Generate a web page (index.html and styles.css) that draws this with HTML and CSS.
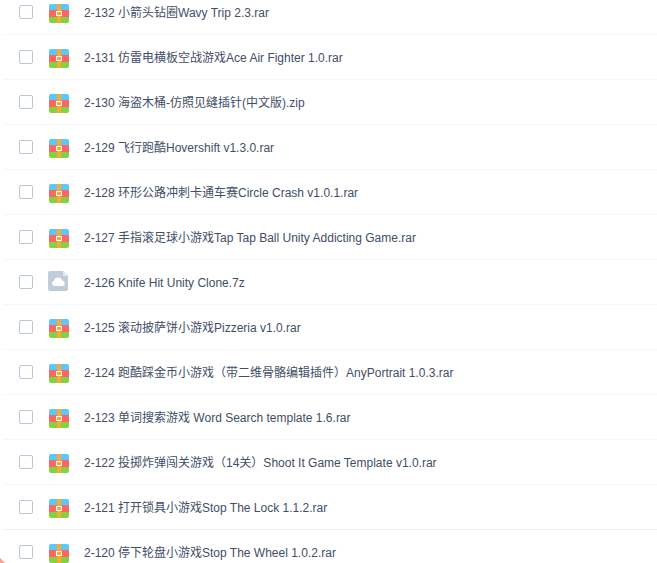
FILE: index.html
```html
<!DOCTYPE html>
<html lang="zh">
<head>
<meta charset="utf-8">
<title>文件列表</title>
<link rel="stylesheet" href="styles.css">
</head>
<body>
<svg class="defs" width="0" height="0" aria-hidden="true">
  <defs>
    <clipPath id="rarClip"><rect x="0" y="0" width="20" height="19" rx="2"/></clipPath>
    <symbol id="rar" viewBox="0 0 20 19">
      <g clip-path="url(#rarClip)">
        <rect width="20" height="6" fill="#5ac8fa"/>
        <rect y="6" width="20" height="7" fill="#ff6661"/>
        <rect y="13" width="20" height="6" fill="#82d243"/>
        <rect x="8" width="4" height="19" fill="#fda92d"/>
        <rect x="7.500" y="7.500" width="5" height="4" fill="none" stroke="#fff" stroke-width="1"/>
      </g>
    </symbol>
    <symbol id="cloud" viewBox="0 0 20 20">
      <path d="M2 0H15L20 5V18a2 2 0 0 1-2 2H2a2 2 0 0 1-2-2V2a2 2 0 0 1 2-2Z" fill="#c0ccd8"/>
      <path d="M15 0L20 5H16.500a1.500 1.500 0 0 1-1.500-1.500Z" fill="#e3e9ef"/>
      <path d="M6.500 15a2.700 2.700 0 0 1-.5-5.300a4.300 4.300 0 0 1 8.200-.2a2.800 2.800 0 0 1 .3 5.500Z" fill="#fff"/>
    </symbol>
  </defs>
</svg>
<main class="list">
  <div class="row"><span class="check"></span><svg class="icon"><use href="#rar"/></svg><span class="name">2-132 小箭头钻圈Wavy Trip 2.3.rar</span></div>
  <div class="row"><span class="check"></span><svg class="icon"><use href="#rar"/></svg><span class="name">2-131 仿雷电横板空战游戏Ace Air Fighter 1.0.rar</span></div>
  <div class="row"><span class="check"></span><svg class="icon"><use href="#rar"/></svg><span class="name">2-130 海盗木桶-仿照见缝插针(中文版).zip</span></div>
  <div class="row"><span class="check"></span><svg class="icon"><use href="#rar"/></svg><span class="name">2-129 飞行跑酷Hovershift v1.3.0.rar</span></div>
  <div class="row"><span class="check"></span><svg class="icon"><use href="#rar"/></svg><span class="name">2-128 环形公路冲刺卡通车赛Circle Crash v1.0.1.rar</span></div>
  <div class="row"><span class="check"></span><svg class="icon"><use href="#rar"/></svg><span class="name">2-127 手指滚足球小游戏Tap Tap Ball Unity Addicting Game.rar</span></div>
  <div class="row"><span class="check"></span><svg class="icon cloud"><use href="#cloud"/></svg><span class="name">2-126 Knife Hit Unity Clone.7z</span></div>
  <div class="row"><span class="check"></span><svg class="icon"><use href="#rar"/></svg><span class="name">2-125 滚动披萨饼小游戏Pizzeria v1.0.rar</span></div>
  <div class="row"><span class="check"></span><svg class="icon"><use href="#rar"/></svg><span class="name">2-124 跑酷踩金币小游戏（带二维骨骼编辑插件）AnyPortrait 1.0.3.rar</span></div>
  <div class="row"><span class="check"></span><svg class="icon"><use href="#rar"/></svg><span class="name">2-123 单词搜索游戏 Word Search template 1.6.rar</span></div>
  <div class="row"><span class="check"></span><svg class="icon"><use href="#rar"/></svg><span class="name">2-122 投掷炸弹闯关游戏（14关）Shoot It Game Template v1.0.rar</span></div>
  <div class="row"><span class="check"></span><svg class="icon"><use href="#rar"/></svg><span class="name">2-121 打开锁具小游戏Stop The Lock 1.1.2.rar</span></div>
  <div class="row"><span class="check"></span><svg class="icon"><use href="#rar"/></svg><span class="name">2-120 停下轮盘小游戏Stop The Wheel 1.0.2.rar</span></div>
</main>
<div class="corner"></div>
</body>
</html>
```
FILE: styles.css
```css
html, body {
  margin: 0;
  padding: 0;
  height: 563px;
  overflow: hidden;
  background: #fff;
}
.defs { position: absolute; }
.list {
  margin-top: -10px;
  padding-left: 3px;
}
.row {
  display: flex;
  align-items: center;
  height: 44px;
  border-bottom: 1px solid #f2f6fd;
  padding-left: 16px;
}
.row:nth-last-child(2) { border-bottom-color: #f0f0f0; }
.check {
  flex: none;
  width: 12px;
  height: 12px;
  border: 1px solid #b9c7d6;
  border-radius: 2px;
}
.icon {
  flex: none;
  width: 20px;
  height: 19px;
  margin: 3px 0 0 16px;
}
.cloud {
  height: 20px;
  margin: 0 1px 2px 15px;
}
.name {
  margin: 2px 0 0 15px;
  font: 12px/16px "Liberation Sans", "Noto Sans CJK SC", sans-serif;
  color: #424e67;
  white-space: nowrap;
}
.corner {
  position: absolute;
  left: 0;
  top: 558px;
  width: 0;
  height: 0;
  border-left: 5px solid #f6a58f;
  border-top: 5px solid transparent;
}
```
